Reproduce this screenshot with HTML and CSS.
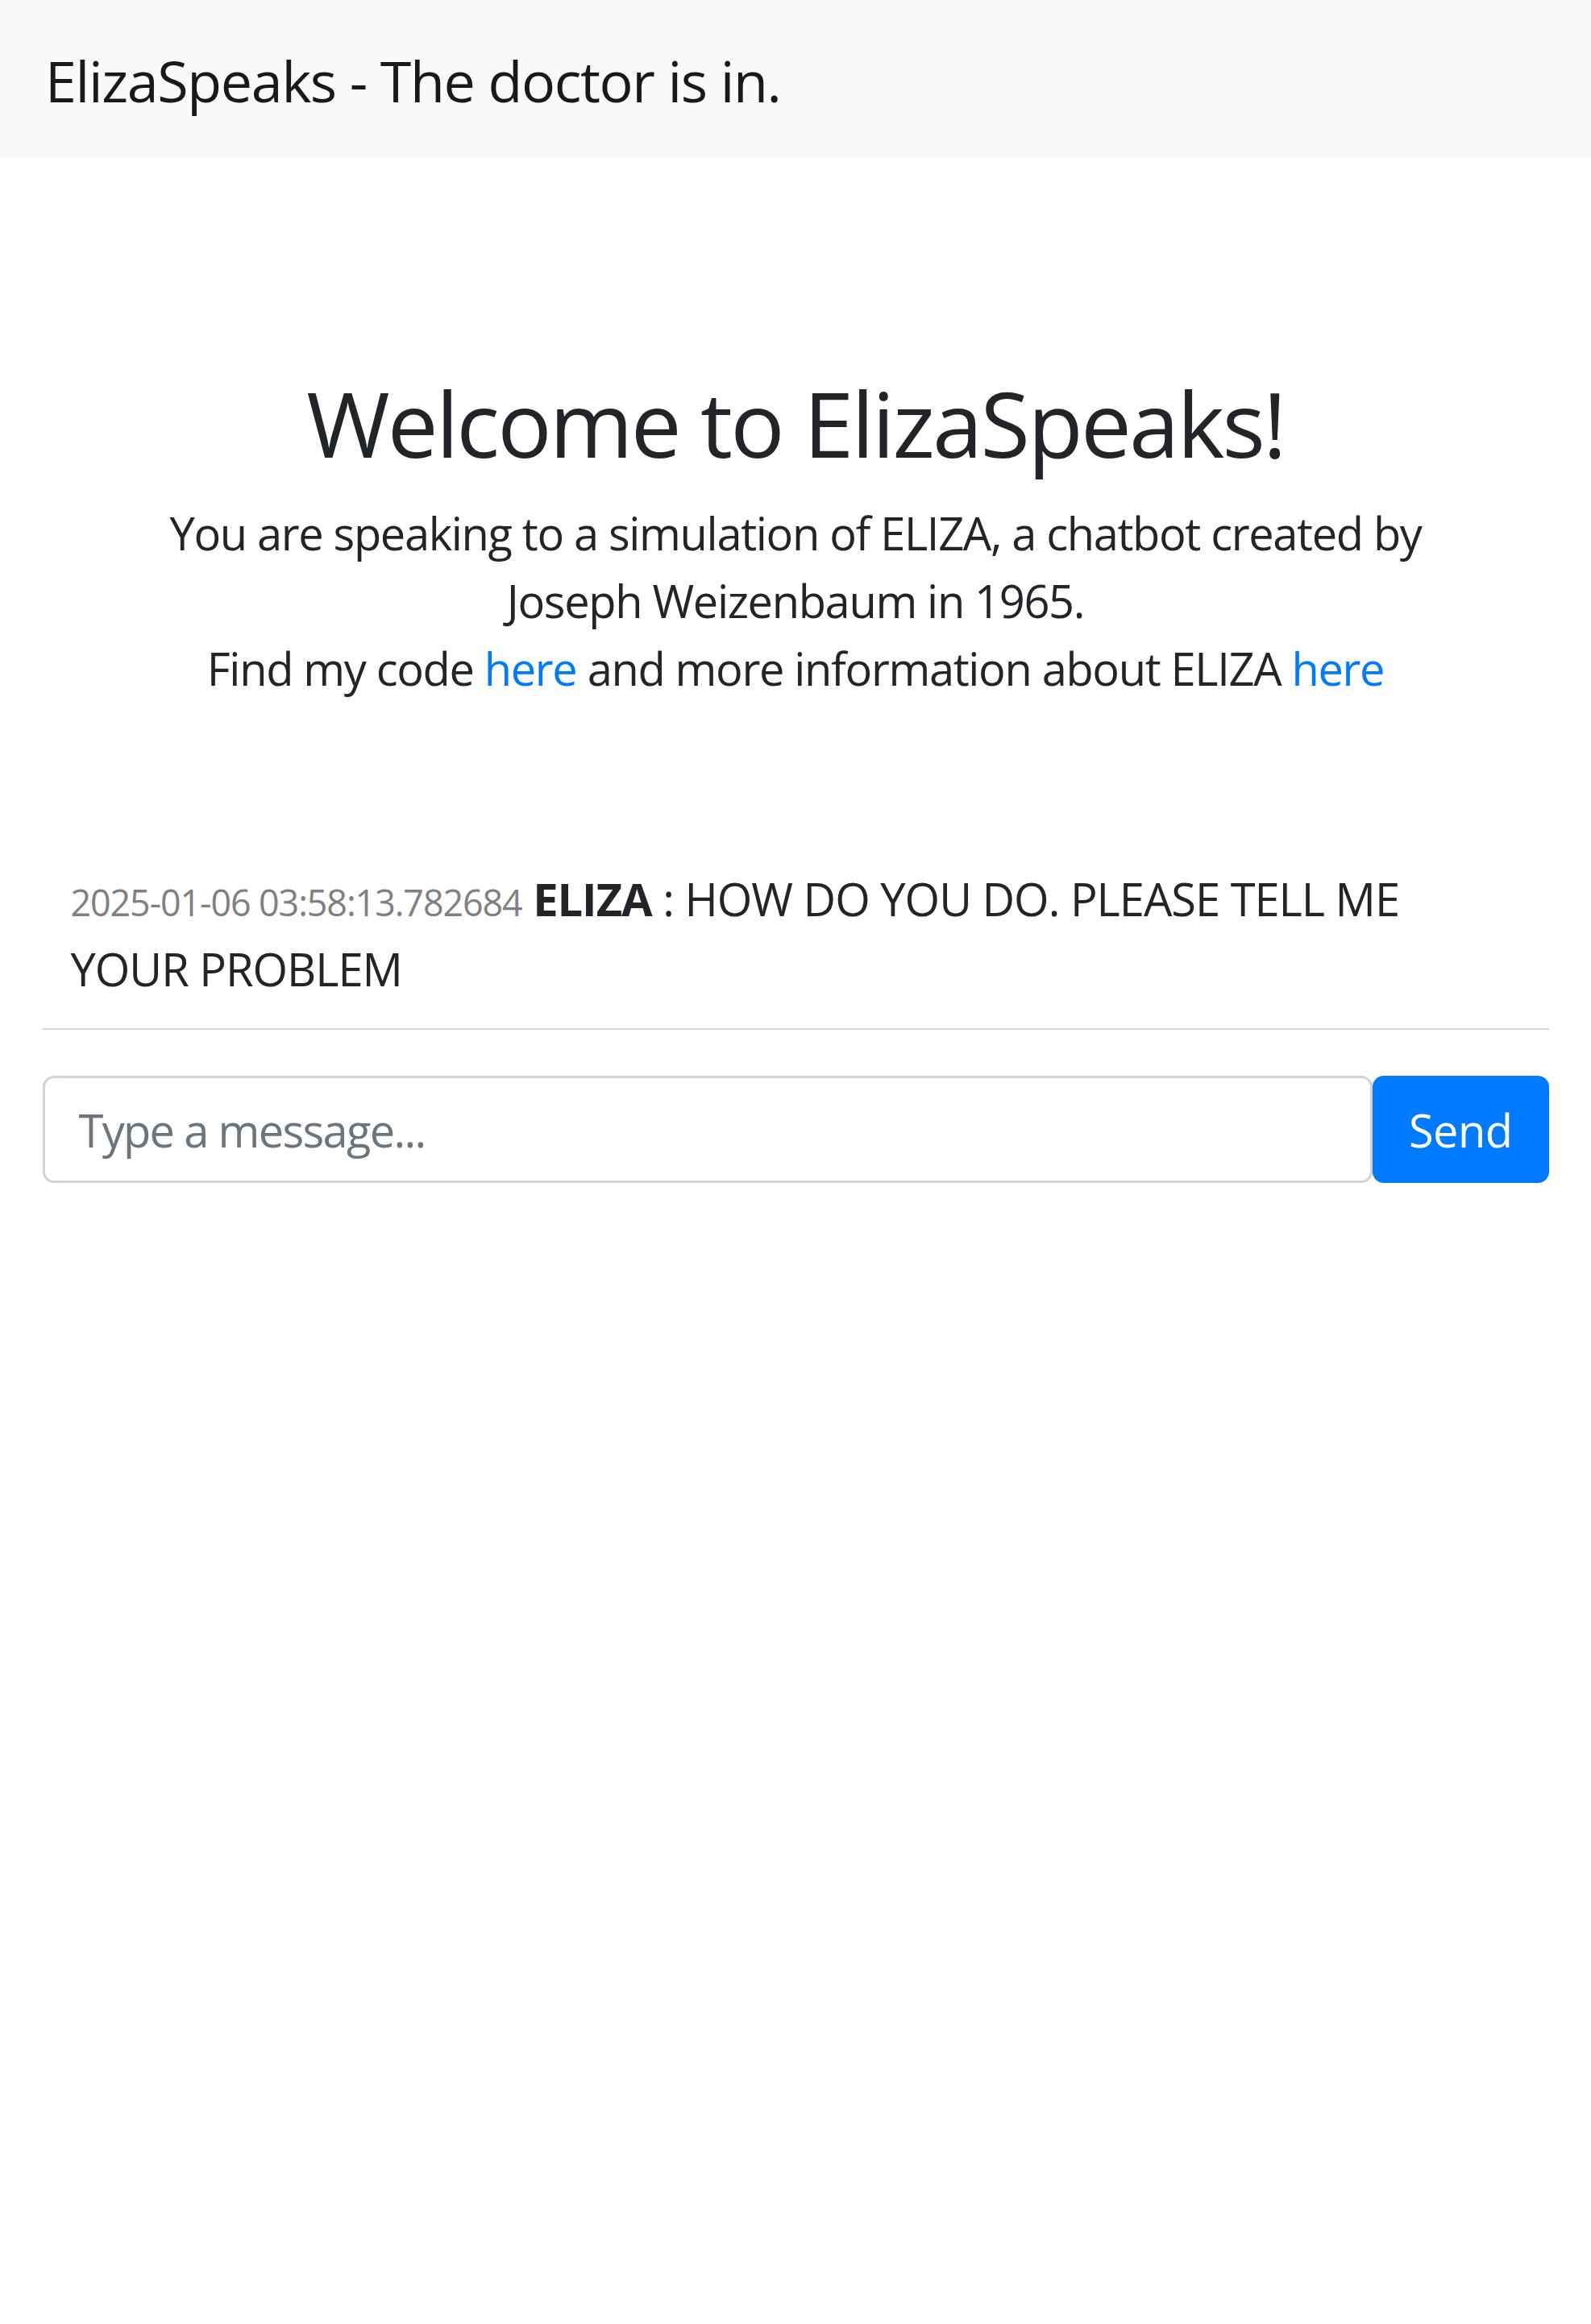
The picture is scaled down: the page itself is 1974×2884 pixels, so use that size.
FILE: index.html
```html
<!DOCTYPE html>
<html lang="en">
<head>
<meta charset="utf-8">
<title>ElizaSpeaks</title>
<link rel="stylesheet" href="styles.css">
</head>
<body>
<nav class="navbar">
  <span class="brand">ElizaSpeaks - The doctor is in.</span>
</nav>
<main class="container">
  <section class="intro">
    <h2 class="title">Welcome to ElizaSpeaks!</h2>
    <p class="lead">You are speaking to a simulation of ELIZA, a chatbot created by Joseph Weizenbaum in 1965.<br>Find my code <a href="#">here</a> and more information about ELIZA <a href="#">here</a></p>
  </section>
  <section class="chat">
    <div class="messages">
      <div class="message"><span class="time">2025-01-06 03:58:13.782684</span> <strong class="sender">ELIZA</strong> : HOW DO YOU DO. PLEASE TELL ME YOUR PROBLEM</div>
    </div>
    <hr class="divider">
    <form class="composer">
      <input class="composer-input" type="text" placeholder="Type a message...">
      <button class="composer-send" type="button">Send</button>
    </form>
  </section>
</main>
</body>
</html>
```

FILE: styles.css
```css
* { box-sizing: border-box; }

body {
  margin: 0;
  font-family: "Open Sans", "Noto Sans", sans-serif;
  color: #212529;
  background: #ffffff;
}

.navbar {
  height: 196px;
  background: #f8f9fa;
  display: flex;
  align-items: center;
  padding: 5px 56px 0;
}

.brand {
  font-size: 70px;
  line-height: 1.5;
  letter-spacing: -0.019em;
  color: rgba(0, 0, 0, 0.9);
}

.container {
  padding: 0 52.5px;
}

.intro {
  padding: 262px 100px 0;
  text-align: center;
}

.title {
  font-size: 112px;
  font-weight: 400;
  line-height: 134px;
  letter-spacing: -0.025em;
  margin: 0 0 27px;
}

.lead {
  font-size: 56px;
  line-height: 84px;
  letter-spacing: -0.024em;
  margin: 0;
}

.lead a {
  color: #007bff;
  text-decoration: none;
}

.chat {
  margin-top: 168px;
}

.messages {
  padding: 35px 35px 32px;
}

.message {
  font-size: 56px;
  line-height: 83px;
  letter-spacing: -0.018em;
}

.time {
  font-size: 44.8px;
  letter-spacing: -0.024em;
  color: #808080;
}

.sender {
  font-weight: 700;
}

.divider {
  border: 0;
  border-top: 2px solid #d6d6d6;
  margin: 0 0 57px;
}

.composer {
  display: flex;
  height: 133px;
}

.composer-input {
  flex: 1;
  min-width: 0;
  height: 100%;
  border: 3px solid #ced4da;
  border-radius: 14px;
  padding: 0 42px;
  font-family: inherit;
  font-size: 56px;
  letter-spacing: -0.03em;
  color: #495057;
  background: #fff;
}

.composer-input::placeholder {
  color: #6c757d;
}

.composer-send {
  height: 100%;
  border: 0;
  border-radius: 14px;
  padding: 0 45px;
  background: #007bff;
  color: #fff;
  font-family: inherit;
  font-size: 56px;
  letter-spacing: -0.01em;
}
```
